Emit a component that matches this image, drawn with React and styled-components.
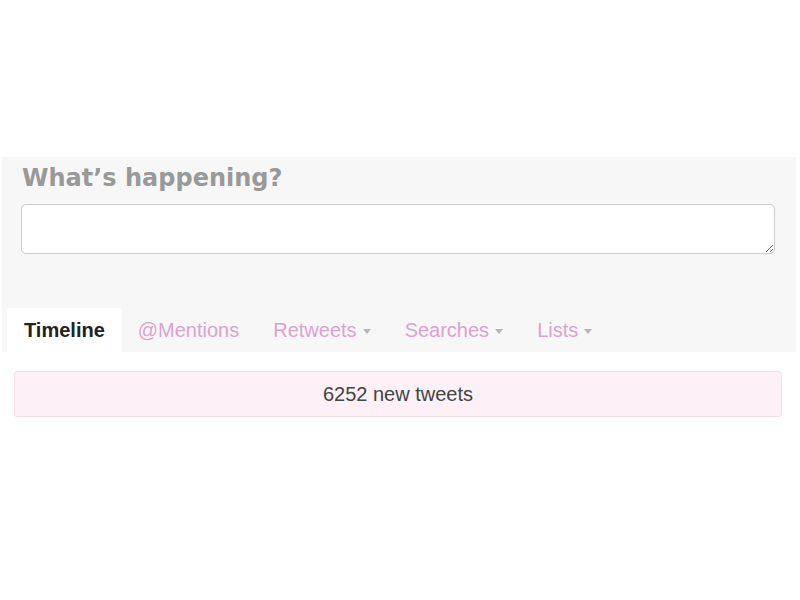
import React from 'react'
import styled, { createGlobalStyle } from 'styled-components'

let GlobalStyle = createGlobalStyle`
  body {
    margin: 0;
    background: #fff;
    font-family: "Liberation Sans", Arial, sans-serif;
  }
`

let Page = styled.div`
  padding-top: 157px;
`

let Composer = styled.div`
  margin: 0 4px 0 2px;
  background: #f7f7f7;
  padding: 6px 21px 0 20px;
`

let Heading = styled.h2`
  margin: 0;
  font-family: "DejaVu Sans", Verdana, sans-serif;
  font-weight: bold;
  font-size: 24px;
  line-height: 30px;
  color: #999;
`

let TweetBox = styled.textarea`
  display: block;
  box-sizing: border-box;
  width: calc(100% + 1px);
  margin: 11px 0 0 -1px;
  height: 50px;
  border: 1px solid #ccc;
  border-radius: 5px;
  background: #fff;
  resize: vertical;
  font: inherit;
`

let TabBar = styled.div`
  display: flex;
  margin: 54px -21px 0 -15px;
  height: 44px;
`

let Tab = styled.div`
  display: flex;
  align-items: center;
  padding: 0 ${p => (p.active ? '17px' : '16px')};
  font-size: 20px;
  font-weight: ${p => (p.active ? 'bold' : 'normal')};
  color: ${p => (p.active ? '#222' : '#dba3cf')};
  background: ${p => (p.active ? '#fff' : 'transparent')};
  border-radius: 3px 3px 0 0;
  margin-right: ${p => (p.active ? '0' : '2px')};
`

let Caret = styled.span`
  display: inline-block;
  margin-left: 6px;
  margin-top: 2px;
  border-top: 5px solid #b5b5b5;
  border-left: 4px solid transparent;
  border-right: 4px solid transparent;
`

let NewTweets = styled.div`
  margin: 19px 18px 0 14px;
  height: 46px;
  box-sizing: border-box;
  display: flex;
  align-items: center;
  justify-content: center;
  background: #fdf0f6;
  border: 1px solid #f4dfe9;
  border-radius: 3px;
  color: #444;
  font-size: 20px;
`

let tabs = [
  { label: 'Timeline', active: true },
  { label: '@Mentions' },
  { label: 'Retweets', menu: true },
  { label: 'Searches', menu: true },
  { label: 'Lists', menu: true },
]

export default function App() {
  return (
    <Page>
      <GlobalStyle />
      <Composer>
        <Heading>What’s happening?</Heading>
        <TweetBox />
        <TabBar>
          {tabs.map(t => (
            <Tab key={t.label} active={t.active}>
              {t.label}
              {t.menu && <Caret />}
            </Tab>
          ))}
        </TabBar>
      </Composer>
      <NewTweets>6252 new tweets</NewTweets>
    </Page>
  )
}
